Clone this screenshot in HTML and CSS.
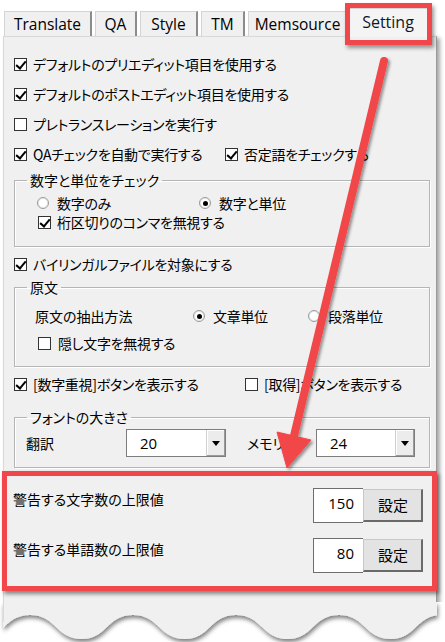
FILE: index.html
```html
<!DOCTYPE html>
<html lang="ja">
<head>
<meta charset="utf-8">
<title>Setting</title>
<link rel="stylesheet" href="styles.css">
</head>
<body>
<div class="frame">
  <nav class="tabs">
    <div class="tab tab-translate">Translate</div>
    <div class="tab tab-qa">QA</div>
    <div class="tab tab-style">Style</div>
    <div class="tab tab-tm">TM</div>
    <div class="tab tab-memsource">Memsource</div>
    <div class="tab tab-setting active">Setting</div>
  </nav>

  <section class="panel">
    <div class="row"><label class="check"><span class="cb on"></span>デフォルトのプリエディット項目を使用する</label></div>
    <div class="row"><label class="check"><span class="cb on"></span>デフォルトのポストエディット項目を使用する</label></div>
    <div class="row"><label class="check"><span class="cb"></span>プレトランスレーションを実行す</label></div>
    <div class="row">
      <label class="check col-qa"><span class="cb on"></span>QAチェックを自動で実行する</label>
      <label class="check"><span class="cb on"></span>否定語をチェックする</label>
    </div>

    <fieldset class="group group-num">
      <legend>数字と単位をチェック</legend>
      <div class="group-body num-body">
        <div class="subrow">
          <label class="radio opt-num"><span class="rb"></span>数字のみ</label>
          <label class="radio"><span class="rb on"></span>数字と単位</label>
        </div>
        <div class="subrow subrow-check">
          <label class="check"><span class="cb on"></span>桁区切りのコンマを無視する</label>
        </div>
      </div>
    </fieldset>

    <div class="row row-bilingual"><label class="check"><span class="cb on"></span>バイリンガルファイルを対象にする</label></div>

    <fieldset class="group group-src">
      <legend>原文</legend>
      <div class="group-body src-body">
        <div class="subrow subrow-tall">
          <span class="src-label">原文の抽出方法</span>
          <label class="radio opt-sentence"><span class="rb on"></span>文章単位</label>
          <label class="radio"><span class="rb"></span>段落単位</label>
        </div>
        <div class="subrow subrow-hidden">
          <label class="check"><span class="cb"></span>隠し文字を無視する</label>
        </div>
      </div>
    </fieldset>

    <div class="row row-buttons">
      <label class="check col-num"><span class="cb on"></span>[数字重視]ボタンを表示する</label>
      <label class="check"><span class="cb"></span>[取得]ボタンを表示する</label>
    </div>

    <fieldset class="group group-font">
      <legend>フォントの大きさ</legend>
      <div class="group-body font-body">
        <div class="font-row">
          <span class="font-label">翻訳</span>
          <div class="select"><span class="select-value">20</span><span class="select-btn"><i class="tri"></i></span></div>
          <span class="font-label font-label-mem">メモリ</span>
          <div class="select select-mem"><span class="select-value">24</span><span class="select-btn"><i class="tri"></i></span></div>
        </div>
      </div>
    </fieldset>

    <div class="limits">
      <div class="limit-row">
        <span class="limit-label">警告する文字数の上限値</span>
        <span class="limit-input">150</span>
        <button class="limit-btn">設定</button>
      </div>
      <div class="limit-row limit-row-2">
        <span class="limit-label">警告する単語数の上限値</span>
        <span class="limit-input">80</span>
        <button class="limit-btn">設定</button>
      </div>
    </div>
  </section>

  <div class="tab-mark"></div>

  <svg class="wave" width="445" height="40" viewBox="0 0 445 40">
    <defs>
      <filter id="ws" x="-10%" y="-50%" width="120%" height="200%">
        <feDropShadow dx="1" dy="3" stdDeviation="2" flood-color="#000" flood-opacity="0.5"/>
      </filter>
      <clipPath id="wc"><rect x="3" y="0" width="434" height="40"/></clipPath>
    </defs>
    <rect x="0" y="0" width="445" height="40" fill="#fff"/>
    <g filter="url(#ws)">
      <path clip-path="url(#wc)" fill="#f0f0f0" d="M-22,0 L-22,37 C4,37 4,13 30,13 C56,13 56,37 82,37 C107,37 107,13 133,13 C159,13 159,37 185,37 C210,37 210,13 236,13 C262,13 262,37 288,37 C313,37 313,13 339,13 C365,13 365,37 391,37 C416,37 416,13 442,13 C468,13 468,37 494,37 L494,0 Z"/>
    </g>
    <line x1="3.5" y1="0" x2="3.5" y2="20" stroke="#d9d9d9"/>
  </svg>

  <svg class="arrow" width="445" height="642" viewBox="0 0 445 642">
    <defs>
      <filter id="as" x="-20%" y="-5%" width="140%" height="110%">
        <feDropShadow dx="2" dy="2" stdDeviation="1.5" flood-color="#000" flood-opacity="0.4"/>
      </filter>
    </defs>
    <g filter="url(#as)" fill="#f2474a" stroke="#f2474a">
      <line x1="384" y1="61" x2="293" y2="440" stroke-width="8" stroke-linecap="round"/>
      <polygon points="287,468 277,432 311,440" stroke-width="1" stroke-linejoin="round"/>
    </g>
  </svg>
</div>
</body>
</html>
```

FILE: styles.css
```css
* { box-sizing: border-box; }

html, body {
  margin: 0;
  padding: 0;
  background: #fff;
  width: 445px;
  height: 642px;
  overflow: hidden;
}

body {
  font-family: "Noto Sans CJK JP", "Noto Sans", sans-serif;
  font-size: 14px;
  font-feature-settings: "palt";
  color: #000;
}

.frame {
  position: relative;
  width: 445px;
  height: 642px;
  padding: 11px 0 0 3px;
}

/* ---------- tabs ---------- */
.tabs {
  display: flex;
  align-items: flex-end;
  gap: 3px;
  height: 25px;
  margin-left: 1px;
}

.tab {
  height: 25px;
  display: flex;
  align-items: center;
  justify-content: center;
  font-family: "Open Sans", "Liberation Sans", sans-serif;
  font-size: 15.5px;
  background: #f0f0f0;
  border-top: 1px solid #d4d4d4;
  border-left: 1px solid #d4d4d4;
  border-right: 2px solid #8c8c8c;
  padding-bottom: 1px;
}

.tab-translate { width: 88px; }
.tab-qa { width: 42px; }
.tab-style { width: 58px; }
.tab-tm { width: 44px; }
.tab-memsource { width: 100px; }
.tab-setting { width: 81px; }

.tab.active {
  position: relative;
  z-index: 2;
  height: 29px;
  margin-bottom: -1px;
  margin-left: -3px;
  background: #f4f4f4;
  padding: 0 0 3px 0;
  font-size: 16px;
  color: #101828;
}

/* ---------- panel ---------- */
.panel {
  width: 434px;
  height: 606px;
  background: #f0f0f0;
  border-top: 1px solid #d9d9d9;
  border-left: 1px solid #d9d9d9;
  border-right: 1px solid #9a9a9a;
  box-shadow: 3px 2px 4px rgba(0, 0, 0, 0.35);
  padding: 12px 6px 0 10px;
}

.row {
  display: flex;
  align-items: center;
  height: 30px;
  line-height: 18px;
}

.check, .radio {
  display: flex;
  align-items: center;
  gap: 6px;
  white-space: nowrap;
  line-height: 18px;
  letter-spacing: -0.3px;
}

.radio { gap: 8px; }

.cb {
  position: relative;
  flex: none;
  width: 13px;
  height: 13px;
  background: #fff;
  border: 1px solid #333;
}

.cb.on::after {
  content: "";
  position: absolute;
  left: 3px;
  top: 0px;
  width: 4px;
  height: 8px;
  border: solid #000;
  border-width: 0 2px 2px 0;
  transform: rotate(40deg);
}

.rb {
  position: relative;
  flex: none;
  width: 12px;
  height: 12px;
  border-radius: 50%;
  background: #fff;
  border: 1px solid #9a9a9a;
  box-shadow: inset 0 0 0 1px #e6e6e6;
}

.rb.on::after {
  content: "";
  position: absolute;
  left: 2.5px;
  top: 2.5px;
  width: 5px;
  height: 5px;
  border-radius: 50%;
  background: #000;
}

.col-qa { width: 211px; }
.col-num { width: 231px; }

/* ---------- group boxes ---------- */
.group {
  margin: 2px 0 0;
  padding: 0;
  min-width: 0;
  border: 1px solid #b5b5b5;
  box-shadow: inset 1px 1px 0 #fff, 1px 1px 0 #fff;
}

.group legend {
  margin-left: 12px;
  padding: 0 3px;
  line-height: 18px;
}

.group-body { line-height: 18px; }

.subrow {
  display: flex;
  align-items: center;
  height: 18px;
}

.num-body { padding: 5px 0 15px 22px; }
.opt-num { width: 162px; }
.subrow-check { margin-top: 1px; padding-left: 1px; }

.row-bilingual { margin-top: 3px; height: 28px; }

.group-src { margin-top: 0; }
.src-body { padding: 10px 0 13px 20px; }
.subrow-tall { height: 20px; }
.src-label { width: 158px; }
.opt-sentence { width: 115px; }
.subrow-hidden { margin-top: 7px; height: 20px; padding-left: 3px; }
.subrow-hidden .check { gap: 7px; }

.row-buttons { margin-top: 2px; }

.group-font { margin-top: 9px; }
.font-body { padding: 3px 0 10px 11px; }

.font-row {
  display: flex;
  align-items: center;
  height: 28px;
}

.font-label { width: 100px; }
.font-label-mem { width: 69px; margin-left: 21px; }

.select {
  display: flex;
  width: 100px;
  height: 28px;
  background: #fff;
  border: 1px solid #7d7d7d;
}

.select-mem { width: 99px; }

.select-value {
  flex: 1;
  padding-left: 13px;
  font-family: "Open Sans", "Liberation Sans", sans-serif;
  font-size: 15px;
  line-height: 26px;
}

.select-btn {
  width: 19px;
  display: flex;
  align-items: center;
  justify-content: center;
  background: #ececec;
  border-left: 1px solid #d0d0d0;
  box-shadow: inset -1px -1px 0 #9a9a9a, inset 1px 1px 0 #fff;
}

.tri {
  width: 0;
  height: 0;
  border-left: 4px solid transparent;
  border-right: 4px solid transparent;
  border-top: 5px solid #000;
}

/* ---------- limits (highlighted) ---------- */
.limits {
  margin: 3px -7px 0 -12px;
  border: 5px solid #f2474a;
  box-shadow: 2px 3px 4px rgba(0, 0, 0, 0.45);
  padding: 12px 9px 13px 6px;
}

.limit-row {
  display: flex;
  align-items: flex-start;
  height: 35px;
}

.limit-row-2 { margin-top: 15px; }

.limit-label {
  flex: 1;
  margin-top: 2px;
  line-height: 18px;
}

.limit-input {
  width: 50px;
  height: 35px;
  background: #fff;
  border: 1px solid #6e6e6e;
  border-right: none;
  text-align: right;
  padding-right: 9px;
  font-family: "Open Sans", "Liberation Sans", sans-serif;
  font-size: 15px;
  line-height: 28px;
}

.limit-btn {
  width: 60px;
  height: 33px;
  margin: 1px 0 0;
  padding: 0 0 0 1px;
  background: #e3e3e3;
  border: 1px solid #c8c8c8;
  border-right: 2px solid #6a6a6a;
  border-bottom: 2px solid #6a6a6a;
  font-family: "Noto Sans CJK JP", sans-serif;
  font-size: 15px;
  line-height: 28px;
  color: #000;
}

/* ---------- annotations ---------- */
.tab-mark {
  position: absolute;
  left: 345px;
  top: 3px;
  width: 87px;
  height: 42px;
  border: 5px solid #f2474a;
  box-shadow: 2px 3px 4px rgba(0, 0, 0, 0.4);
  z-index: 4;
}

.wave {
  position: absolute;
  left: 0;
  top: 602px;
  z-index: 3;
}

.arrow {
  position: absolute;
  left: 0;
  top: 0;
  z-index: 5;
  pointer-events: none;
}
```
